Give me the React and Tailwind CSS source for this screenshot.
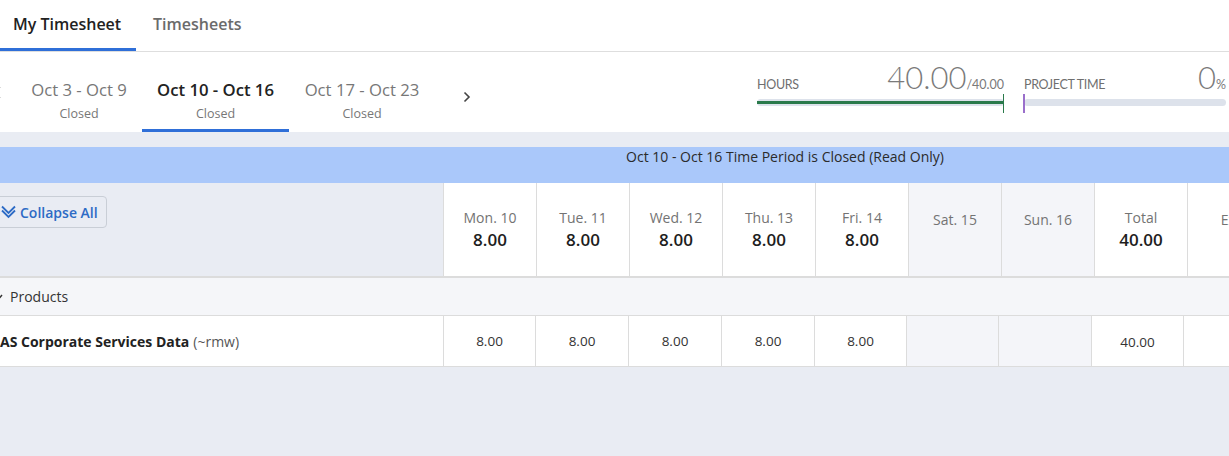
import React from 'react';

const days = [
  { label: 'Mon. 10', value: '8.00' },
  { label: 'Tue. 11', value: '8.00' },
  { label: 'Wed. 12', value: '8.00' },
  { label: 'Thu. 13', value: '8.00' },
  { label: 'Fri. 14', value: '8.00' },
  { label: 'Sat. 15', weekend: true },
  { label: 'Sun. 16', weekend: true },
  { label: 'Total', value: '40.00' },
];

const rowCells = [
  { w: 'w-[92px]', v: '8.00' },
  { w: 'w-[93px]', v: '8.00' },
  { w: 'w-[93px]', v: '8.00' },
  { w: 'w-[93px]', v: '8.00' },
  { w: 'w-[92px]', v: '8.00' },
  { w: 'w-[92px]', weekend: true },
  { w: 'w-[93px]', weekend: true },
  { w: 'w-[92px]', v: '40.00', total: true },
];

const periods = [
  { label: 'Oct 3 - Oct 9', w: 'w-[126px]' },
  { label: 'Oct 10 - Oct 16', w: 'w-[147px]', active: true },
  { label: 'Oct 17 - Oct 23', w: 'w-[146px]' },
];

const Meter = ({ label, value, suffix, width, tick, fill }) => (
  <div className={`relative ${width} font-['Lato',sans-serif]`}>
    <div className="flex items-baseline justify-between h-[31px]">
      <span className="text-[12.5px] text-[#6f6f6f] tracking-tight">{label}</span>
      <span className="leading-[31px]">
        <span className="text-[31px] font-light text-[#7a7a7a]">{value}</span>
        <span className="text-[12.5px] text-[#7a7a7a]">{suffix}</span>
      </span>
    </div>
    <div className="mt-[6px] h-[7px] rounded-full bg-[#dde2eb] flex items-center">
      {fill && <div className="h-[3px] w-full bg-[#2a7a4b]" />}
    </div>
    <div className={`absolute top-[32px] w-[1.5px] h-[19px] ${tick}`} />
  </div>
);

export default function App() {
  return (
    <div className="w-[1229px] h-[456px] overflow-hidden bg-[#e9ecf3] font-['Open_Sans',sans-serif] text-[#333]">
      {/* top tabs */}
      <div className="h-[52px] bg-white border-b border-[#dedede] flex">
        <div className="w-[136px] h-[51px] border-b-[3px] border-[#2f6fd8] pl-[13px] pt-[12px] text-[16px] font-semibold text-[#222]">
          My Timesheet
        </div>
        <div className="pl-[17px] pt-[12px] text-[16px] font-semibold text-[#6b6b6b]">Timesheets</div>
      </div>

      {/* period nav + meters */}
      <div className="h-[80px] bg-white flex">
        <div className="w-[16px] flex justify-start items-start pt-[34px]">
          <svg width="8" height="13" viewBox="0 0 8 13" className="-ml-[7px]">
            <polyline points="7,1 1,6.5 7,12" fill="none" stroke="#666" strokeWidth="1.5" />
          </svg>
        </div>
        {periods.map((p) => (
          <div
            key={p.label}
            className={`${p.w} h-full flex flex-col items-center pt-[27px] border-b-[3px] ${p.active ? 'border-[#2f6fd8]' : 'border-transparent'}`}
          >
            <span className={`text-[16.7px] leading-[22px] ${p.active ? 'font-semibold text-[#222]' : 'text-[#777]'}`}>{p.label}</span>
            <span className="text-[12.5px] leading-[18px] mt-[4px] text-[#777]">Closed</span>
          </div>
        ))}
        <div className="pl-[28px] pt-[39px]">
          <svg width="8" height="12" viewBox="0 0 8 12">
            <polyline points="1.5,1.5 6,6 1.5,10.5" fill="none" stroke="#444" strokeWidth="1.6" />
          </svg>
        </div>
        <div className="ml-auto mr-[3px] flex gap-[20px] pt-[10px]">
          <Meter label="HOURS" value="40.00" suffix="/40.00" width="w-[247px]" tick="right-0 bg-[#2a7a4b]" fill />
          <Meter label="PROJECT TIME" value="0" suffix="%" width="w-[202px]" tick="-left-[1px] bg-[#9a6fcb]" />
        </div>
      </div>

      <div className="h-[15px]" />

      {/* closed banner */}
      <div className="h-[36px] bg-[#aac8fa] overflow-hidden">
        <div className="w-[1570px] text-center text-[14px] leading-[20px] text-[#2b2b2b]">
          Oct 10 - Oct 16 Time Period is Closed (Read Only)
        </div>
      </div>

      {/* header row */}
      <div className="h-[95px] flex border-b-2 border-[#dcdcdc]">
        <div className="w-[444px] shrink-0 border-r border-[#dcdcdc] pt-[13px]">
          <button className="-ml-[7px] h-[32px] pl-[7px] pr-[8px] flex items-center gap-[4px] border border-[#c9ced6] rounded-[4px] text-[14px] font-semibold text-[#2d6bc5]">
            <svg width="15" height="14" viewBox="0 0 15 14">
              <polyline points="1,1.5 7.5,8 14,1.5" fill="none" stroke="#2d6bc5" strokeWidth="1.8" />
              <polyline points="1,5.5 7.5,12 14,5.5" fill="none" stroke="#2d6bc5" strokeWidth="1.8" />
            </svg>
            Collapse All
          </button>
        </div>
        {days.map((d) => (
          <div
            key={d.label}
            className={`w-[93px] shrink-0 border-r border-[#dcdcdc] flex flex-col items-center ${d.weekend ? 'bg-[#f4f5f9] pt-[27px]' : 'bg-white pt-[25px]'}`}
          >
            <span className="text-[14px] leading-[20px] text-[#737373]">{d.label}</span>
            {d.value && <span className="text-[17px] leading-[24px] font-semibold text-[#1e1e1e]">{d.value}</span>}
          </div>
        ))}
        <div className="w-[93px] shrink-0 bg-white flex flex-col items-center pt-[27px]">
          <span className="text-[14px] leading-[20px] text-[#737373]">Exp.</span>
        </div>
      </div>

      {/* group row */}
      <div className="h-[38px] bg-[#f5f6f9] border-b border-[#dcdcdc] flex items-center">
        <svg width="8" height="6" viewBox="0 0 8 6" className="-ml-[5px]">
          <polyline points="1,1 4,4.5 7,1" fill="none" stroke="#333" strokeWidth="1.5" />
        </svg>
        <span className="ml-[7px] text-[14px] text-[#333]">Products</span>
      </div>

      {/* data row */}
      <div className="h-[51px] bg-white border-b border-[#dcdcdc] flex">
        <div className="w-[444px] shrink-0 border-r border-[#dcdcdc] flex items-center text-[14px] text-[#222]">
          <span className="font-bold">AS Corporate Services Data</span>
          <span className="ml-[4px] text-[#555]">(~rmw)</span>
        </div>
        {rowCells.map((c, i) => (
          <div
            key={i}
            className={`${c.w} shrink-0 border-r border-[#dcdcdc] flex justify-center items-center text-[13.5px] text-[#333] ${c.weekend ? 'bg-[#f4f5f9]' : ''} ${c.total ? 'pt-[2px]' : ''}`}
          >
            {c.v}
          </div>
        ))}
        <div className="flex-1" />
      </div>
    </div>
  );
}
